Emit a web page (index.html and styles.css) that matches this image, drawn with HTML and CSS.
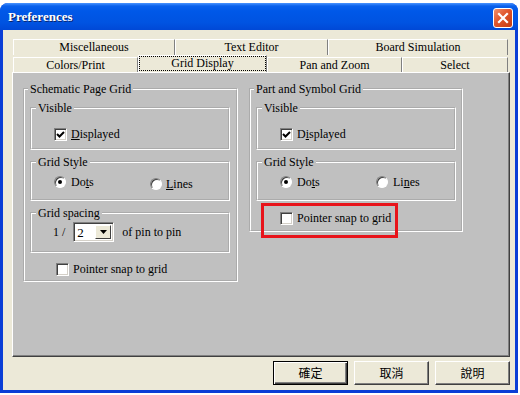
FILE: index.html
```html
<!DOCTYPE html>
<html lang="en">
<head>
  <meta charset="UTF-8" />
  <title>Preferences</title>
  <link rel="stylesheet" href="styles.css">
</head>
<body>
  <div class="window">
    <div class="titlebar">
      <span class="title">Preferences</span>
      <span class="close">
        <svg width="18" height="18" viewBox="0 0 18 18"><path d="M5 5 L13 13 M13 5 L5 13" stroke="#fff" stroke-width="2.2" stroke-linecap="square"/></svg>
      </span>
    </div>

    <div class="frame">
      <div class="tabs">
        <div class="tab-row back">
          <div class="tab">Miscellaneous</div>
          <div class="tab">Text Editor</div>
          <div class="tab">Board Simulation</div>
        </div>
        <div class="tab-row front">
          <div class="tab">Colors/Print</div>
          <div class="tab active">Grid Display</div>
          <div class="tab">Pan and Zoom</div>
          <div class="tab">Select</div>
        </div>
      </div>

      <div class="panel">
        <fieldset class="group">
          <legend>Schematic Page Grid</legend>
          <fieldset class="sub visible">
            <legend>Visible</legend>
            <label class="check"><span class="box"><svg width="9" height="9" viewBox="0 0 9 9"><path d="M1 4 L3.5 6.5 L8 2" stroke="#000" stroke-width="2" fill="none"/></svg></span><span><u>D</u>isplayed</span></label>
          </fieldset>
          <fieldset class="sub style">
            <legend>Grid Style</legend>
            <div class="radios">
              <label class="radio"><span class="dot on"></span><span>Do<u>t</u>s</span></label>
              <label class="radio low"><span class="dot"></span><span><u>L</u>ines</span></label>
            </div>
          </fieldset>
          <fieldset class="sub spacing">
            <legend>Grid spacing</legend>
            <div class="spacing-row">
              <span>1 /</span>
              <span class="combo"><span class="combo-val">2</span><span class="combo-btn"><svg width="7" height="4" viewBox="0 0 7 4"><path d="M0 0 H7 L3.5 4 Z" fill="#000"/></svg></span></span>
              <span>of pin to pin</span>
            </div>
          </fieldset>
          <label class="check snap"><span class="box"></span><span>Pointer snap to grid</span></label>
        </fieldset>

        <fieldset class="group">
          <legend>Part and Symbol Grid</legend>
          <fieldset class="sub visible">
            <legend>Visible</legend>
            <label class="check"><span class="box"><svg width="9" height="9" viewBox="0 0 9 9"><path d="M1 4 L3.5 6.5 L8 2" stroke="#000" stroke-width="2" fill="none"/></svg></span><span>D<u>i</u>splayed</span></label>
          </fieldset>
          <fieldset class="sub style">
            <legend>Grid Style</legend>
            <div class="radios">
              <label class="radio"><span class="dot on"></span><span>Do<u>t</u>s</span></label>
              <label class="radio"><span class="dot"></span><span>Li<u>n</u>es</span></label>
            </div>
          </fieldset>
          <label class="check snap hl"><span class="box"></span><span>Pointer snap to grid</span></label>
        </fieldset>
      </div>

      <div class="buttons">
        <button class="btn default">確定</button>
        <button class="btn">取消</button>
        <button class="btn">說明</button>
      </div>
    </div>
  </div>
</body>
</html>
```

FILE: styles.css
```css
*,*::after{box-sizing:border-box}
body{
  margin:0;background:#fff;color:#000;
  font:12px/14px "Liberation Serif","Times New Roman",serif;
}

/* window chrome */
.window{
  margin-top:3px;width:518px;height:390px;
  display:flex;flex-direction:column;
  background:#0a3ed6;border-radius:8px 8px 0 0;
}
.titlebar{
  height:27px;flex:none;
  display:flex;justify-content:space-between;align-items:flex-start;
  padding:5px 5px 0 8px;border-radius:8px 8px 0 0;
  background:linear-gradient(#4a94ff 0,#0a61ec 3px,#0058e8 8px,#0053e1 20px,#0048d6 27px);
}
.title{
  color:#fff;font:bold 13px/17px "Liberation Serif",serif;
  text-shadow:1px 1px 0 #0a246a;
}
.close{
  width:20px;height:20px;display:flex;align-items:center;justify-content:center;
  border:1px solid #fff;border-radius:3px;
  background:linear-gradient(135deg,#f0906c,#e0552c 45%,#c23c12);
}

.frame{
  flex:1;margin:0 3px 3px;background:#ece9d8;
  display:flex;flex-direction:column;
  padding:9px 5px 5px 9px;
}

/* tabs */
.tabs{margin:0 2px 0 1px;height:33px;display:flex;flex-direction:column}
.tab-row{display:grid;align-items:end}
.tab-row.back{height:16px;grid-template-columns:162px 153px 180px}
.tab-row.front{height:17px;grid-template-columns:125px 129px 135px 106px}
.tab{
  text-align:center;background:#ece9d8;
  border-top:1px solid #fff;border-left:1px solid #fff;border-right:1px solid #808080;
}
.back .tab{height:16px;line-height:15px}
.front .tab{height:15px;line-height:15px}
.front .tab.active{
  height:17px;line-height:14px;
  outline:1px dotted #000;outline-offset:-2px;
}

.panel{
  flex:1;background:#c0c0c0;
  border:1px solid;border-color:#fff #404040 #404040 #fff;
  box-shadow:inset -1px -1px 0 #808080;
  display:flex;align-items:flex-start;gap:11px;
  padding:9px 0 0 10px;
}

/* group boxes */
fieldset{margin:0;min-width:0;border:2px groove #fff}
legend{padding:0 2px;line-height:14px}
.group{width:215px;padding:0 4px 4px 3px}
.group + .group{width:214px}
.sub{margin:5px 0 0 2px;width:200px;padding:0 4px}
.visible{padding-top:12px;padding-bottom:7px}
.style{padding-top:6px;padding-bottom:10px}
.spacing{padding-top:2px;padding-bottom:9px}

.check,.radio{display:flex;align-items:center;height:14px}
.check{gap:4px}
.visible .check{margin-left:18px}
.box{
  width:13px;height:13px;flex:none;background:#fff;
  border:1px solid;border-color:#808080 #fff #fff #808080;
  box-shadow:inset 1px 1px 0 #404040,inset -1px -1px 0 #d4d0c8;
  display:flex;align-items:center;justify-content:center;
}
.snap{margin:9px 0 0 28px}
.snap.hl{margin:10px 0 1px 26px;position:relative}
.snap.hl::after{
  content:"";position:absolute;left:-19px;top:-8px;width:137px;height:35px;
  border:3px solid #e8141b;
}

.radios{display:grid;grid-template-columns:96px auto;margin-left:18px;height:14px}
.radio{gap:5px}
.radio.low{margin-top:2px;gap:4px}
.dot{
  width:12px;height:12px;flex:none;border-radius:50%;background:#fff;
  border:1px solid;border-color:#808080 #fff #fff #808080;
  box-shadow:inset 1px 1px 0 #404040;
  display:flex;align-items:center;justify-content:center;
}
.dot.on::after{content:"";width:4px;height:4px;border-radius:50%;background:#000}

.spacing-row{display:flex;align-items:center;gap:8px;margin-left:17px;height:20px}
.combo{
  width:41px;height:20px;display:flex;background:#fff;
  border:1px solid;border-color:#808080 #fff #fff #808080;
  box-shadow:inset 1px 1px 0 #404040,inset -1px -1px 0 #d4d0c8;
  padding:2px;
}
.combo-val{flex:1;padding-left:1px;font-size:13px;line-height:15px}
.combo-btn{
  width:16px;background:#ece9d8;
  border:1px solid;border-color:#fff #404040 #404040 #fff;
  display:flex;align-items:center;justify-content:center;
}

/* dialog buttons */
.buttons{display:flex;justify-content:flex-end;gap:6px;margin-top:4px}
.btn{
  width:75px;height:24px;padding:0;background:#ece9d8;
  font:12px/14px "Noto Sans CJK TC","Noto Sans",sans-serif;color:#000;
  border:1px solid;border-color:#fff #404040 #404040 #fff;
  box-shadow:inset -1px -1px 0 #808080;
}
.btn.default{
  border-color:#000;
  box-shadow:inset 1px 1px 0 #fff,inset -1px -1px 0 #404040,inset -2px -2px 0 #808080;
}
```
